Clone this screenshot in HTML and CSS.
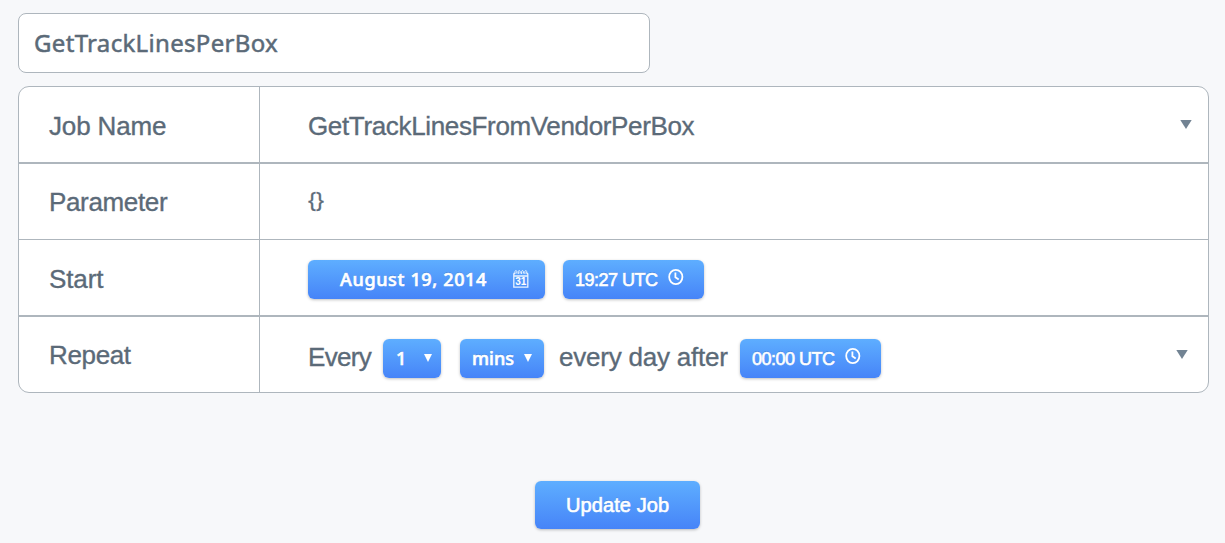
FILE: index.html
```html
<!DOCTYPE html>
<html lang="en">
<head>
<meta charset="utf-8">
<title>Update Job</title>
<link rel="stylesheet" href="styles.css">
</head>
<body>
<main class="page">
  <div class="title-field"><span class="title-text">GetTrackLinesPerBox</span></div>
  <section class="table">
    <div class="row">
      <div class="label first"><span class="t-jobname">Job Name</span></div>
      <div class="value"><span class="t-vendor">GetTrackLinesFromVendorPerBox</span>
        <svg class="caret caret-job" width="12" height="9" viewBox="0 0 12 9"><path d="M.3 0h11.4L6 9z"/></svg></div>
    </div>
    <div class="row thick">
      <div class="label"><span class="t-param">Parameter</span></div>
      <div class="value"><span class="braces">{}</span></div>
    </div>
    <div class="row">
      <div class="label low"><span class="t-start">Start</span></div>
      <div class="value">
        <div class="btn date"><span class="t-date">August 19, 2014</span>
          <svg class="calendar" width="16" height="20" viewBox="0 0 16 20">
            <path d="M.8 4.500v13.700h14V4.500M.8 7h14M.5 4.500h1.500M13.600 4.500h1.500"/>
            <path class="ring" d="M2 5V2.500Q2.900.3 3.800 2.500V4.500M5.300 5V2.500Q6.200.3 7.100 2.500V4.500M8.600 5V2.500q.9-2.200 1.800 0V4.500M11.900 5V2.500q.9-2.200 1.800 0V4.500"/>
            <text x="7.800" y="16.300" text-anchor="middle">31</text>
          </svg></div>
        <div class="btn time start-time"><span class="t-time">19:27 UTC</span>
          <svg class="clock" width="16" height="18" viewBox="0 0 16 18"><ellipse cx="7.800" cy="9" rx="6.600" ry="7.200"/><path d="M7.400 4.500v4.800l3.300 2.300"/></svg></div>
      </div>
    </div>
    <div class="row thick">
      <div class="label"><span class="t-repeat">Repeat</span></div>
      <div class="value repeat">
        <span class="t-every">Every</span>
        <div class="btn count"><span class="t-one">1</span><svg class="mini" width="8" height="8" viewBox="0 0 8 8"><path d="M0 0h8L4 8z"/></svg></div>
        <div class="btn unit"><span class="t-mins">mins</span><svg class="mini" width="8" height="8" viewBox="0 0 8 8"><path d="M0 0h8L4 8z"/></svg></div>
        <span class="t-after">every day after</span>
        <div class="btn time after-time"><span class="t-time">00:00 UTC</span>
          <svg class="clock" width="16" height="18" viewBox="0 0 16 18"><ellipse cx="7.800" cy="9" rx="6.600" ry="7.200"/><path d="M7.400 4.500v4.800l3.300 2.300"/></svg></div>
        <svg class="caret caret-repeat" width="12" height="9" viewBox="0 0 12 9"><path d="M.3 0h11.4L6 9z"/></svg>
      </div>
    </div>
  </section>
  <div class="btn submit"><span class="t-update">Update Job</span></div>
</main>
</body>
</html>
```
FILE: styles.css
```css
* { box-sizing: border-box; }
body {
  margin: 0;
  background: #f7f8fa;
  color: #5b6a78;
  font-family: "Liberation Sans", Arial, sans-serif;
  font-size: 26px;
}
.page { height: 543px; padding: 13px 16px 0 18px; overflow: hidden; }
span { white-space: nowrap; line-height: 30px; -webkit-text-stroke: .35px currentColor; }
svg { flex: none; display: block; }
.title-field {
  width: 632px;
  height: 60px;
  padding: 14px 0 0 15px;
  border: 1px solid #aeb6bd;
  border-radius: 8px;
  background: #fff;
  font: 24px "Noto Sans", sans-serif;
}
.title-text { display: block; letter-spacing: .32px; -webkit-text-stroke-width: .5px; }
.table {
  height: 307px;
  margin-top: 13px;
  border: 1px solid #aeb6bd;
  border-radius: 11px;
  background: #fff;
}
.row { display: flex; height: 75px; }
.row + .row { height: 76px; border-top: 1px solid #aeb6bd; }
.row + .row.thick { height: 77px; border-top-width: 2px; }
.label { display: flex; flex: none; width: 241px; padding: 23px 0 0 30px; border-right: 1px solid #aeb6bd; }
.label.low, .label.first { padding-top: 24px; }
.value { display: flex; flex: 1; align-items: flex-start; padding: 24px 0 0 48px; }
.braces { font: 21px/30px "Noto Sans", sans-serif; margin-top: -3px; }
.row:nth-child(3) .value { padding-top: 20px; }
.value.repeat { padding-top: 22px; }
.repeat > span { margin-top: 3px; }
.caret { fill: #728393; }
.caret-job { margin: 9px 16px 0 auto; }
.caret-repeat { margin: 11px 20px 0 auto; }
.btn {
  display: flex;
  flex: none;
  height: 39px;
  border-radius: 6px;
  background: linear-gradient(#5eaeff, #4684f8);
  box-shadow: 0 1px 3px rgba(0, 0, 0, .25);
  color: #fff;
  font-size: 18px;
  text-shadow: 0 -1px 0 rgba(30, 80, 160, .35);
}
.btn > span { margin-top: 5px; -webkit-text-stroke-width: .6px; }
.date { width: 237px; padding-left: 32px; }
.date, .count, .unit { font-family: "Noto Sans", sans-serif; font-weight: 500; }
.date > span, .count > span, .unit > span { margin-top: 4px; }
.calendar { margin: 9px 0 0 25px; fill: none; stroke: #e9f3ff; stroke-width: 1.3; }
.calendar .ring { stroke-width: 1; }
.calendar text { fill: #fff; stroke: none; font: bold 10px "Liberation Sans", sans-serif; text-shadow: none; }
.time { width: 141px; padding-left: 12px; }
.start-time { margin-left: 18px; }
.clock { margin: 8px 0 0 10px; fill: none; stroke: #fff; stroke-width: 1.8; }
.count { width: 58px; margin-left: 12px; padding-left: 13px; }
.unit { width: 84px; margin-left: 19px; padding-left: 12px; }
.mini { margin: 15px 9px 0 auto; fill: #fff; }
.unit .mini { margin-right: 12px; }
.t-after { margin-left: 15px; }
.after-time { margin-left: 12px; }
.submit { width: 165px; height: 48px; margin: 88px 0 0 517px; padding-left: 31px; font-size: 20px; }
.submit > span { margin-top: 9px; }
.t-jobname { letter-spacing: -.15px; }
.t-param, .t-repeat { letter-spacing: -.35px; }
.t-start { letter-spacing: -.1px; }
.t-vendor { letter-spacing: -.35px; }
.t-every { width: 63px; letter-spacing: -.7px; }
.t-after { width: 169px; letter-spacing: -.22px; }
.t-date { width: 148px; letter-spacing: .65px; }
.t-time { width: 83px; letter-spacing: -.5px; }
.t-update { letter-spacing: .1px; }
```
